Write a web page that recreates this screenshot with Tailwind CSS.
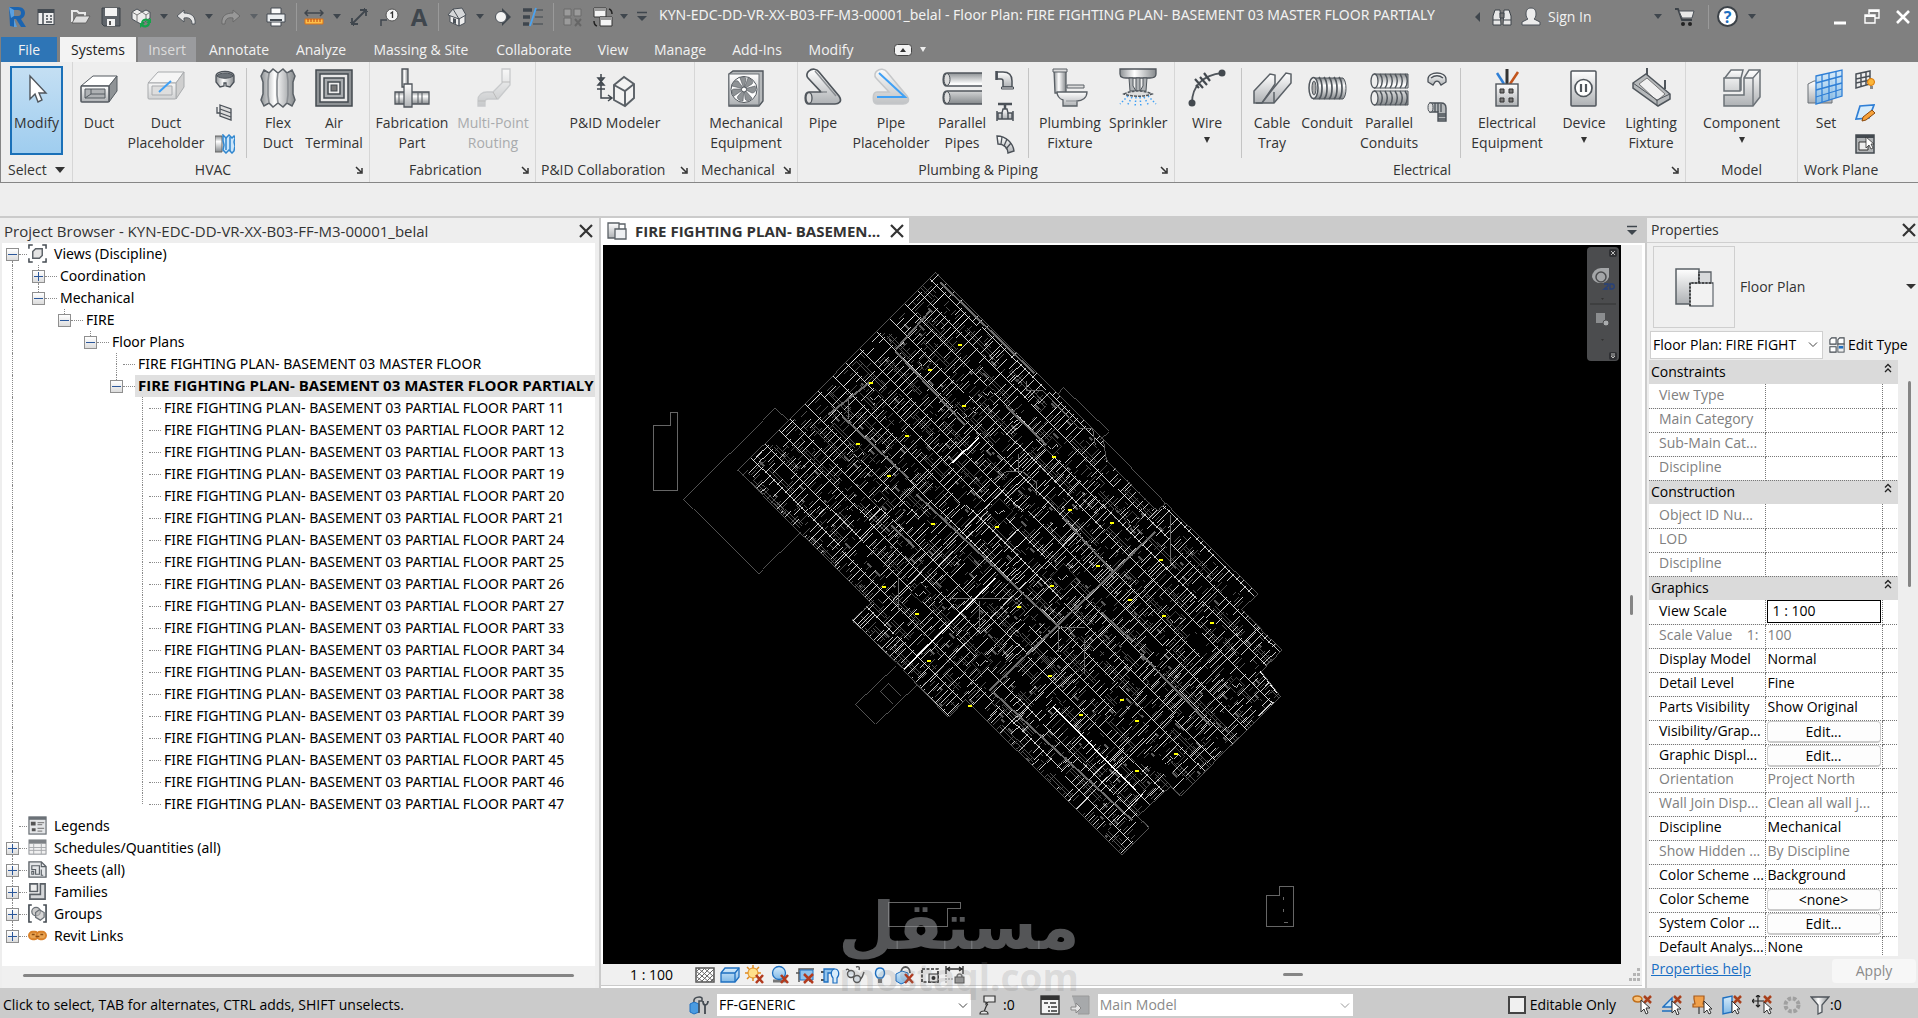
<!DOCTYPE html>
<html lang="en">

<head>
    <meta charset="UTF-8">
    <meta name="viewport" content="width=device-width, initial-scale=1.0">
    <title>Floor Plan: FIRE FIGHTING PLAN- BASEMENT 03 MASTER FLOOR PARTIALY</title>
    <script src="https://cdn.jsdelivr.net/npm/@tailwindcss/browser@4"></script>
</head>

<body class="flex h-screen flex-col overflow-hidden bg-[#eeeeee] font-['Open_Sans','Segoe_UI',sans-serif] text-sm text-[#333333]">

    <!-- shared gradients -->
    <svg class="absolute h-0 w-0" aria-hidden="true">
        <defs>
            <linearGradient id="steel" x1="0" y1="0" x2="0" y2="1"><stop offset="0" stop-color="#fff" /><stop offset="1" stop-color="#aeb1b4" /></linearGradient>
            <linearGradient id="tube" x1="0" y1="0" x2="0" y2="1"><stop offset="0" stop-color="#8d9194" /><stop offset=".35" stop-color="#fff" /><stop offset="1" stop-color="#85898c" /></linearGradient>
            <linearGradient id="ribs" x1="0" y1="0" x2="1" y2="0"><stop offset="0" stop-color="#8d9194" /><stop offset=".4" stop-color="#fff" /><stop offset="1" stop-color="#85898c" /></linearGradient>
            <linearGradient id="glass" x1="0" y1="0" x2="0" y2="1"><stop offset="0" stop-color="#d7ecfb" /><stop offset="1" stop-color="#7fb8e6" /></linearGradient>
        </defs>
    </svg>

    <!-- title bar -->
    <header class="flex h-[37px] shrink-0 items-center bg-[#808080] pb-1 text-[#f2f2f2]">
        <button class="flex w-[34px] justify-center" aria-label="Revit"><svg class="h-6 w-5" viewBox="0 0 20 24"><path d="M2 2h9c5 0 7 3 7 6 0 3-2 5-4 6l5 8h-5l-5-8H7l1 8-5-1z" fill="#1b64b0" /><path d="M7 5h4c2 0 3 1 3 3s-1 3-3 3H7z" fill="#808080" /><path d="M2 2l5 3v6l-3 2zM7 14l3 8H7z" fill="#5aa0e0" /></svg></button>
        <button class="flex w-6 justify-center" aria-label="Home"><svg class="h-5 w-5" viewBox="0 0 20 20"><rect x="2" y="2.500" width="16" height="15" fill="#eee" stroke="#444b52" /><path d="M2 3h16v3H2z" fill="#444b52" /><path d="M7 6v11M10 9h2M14 9h2M10 12h2M14 12h2M10 15h6" stroke="#444b52" stroke-width="1.500" /></svg></button>
        <button class="ml-2 flex w-[30px] justify-center" aria-label="Open"><svg class="h-5 w-5" viewBox="0 0 20 20"><path d="M1 15V4h5l2 2h6v3" fill="none" stroke="#e8e8e8" stroke-width="2" /><path d="M5 9h14l-4 7H1z" fill="#ddd" stroke="#555" stroke-width=".8" /></svg></button>
        <button class="flex w-[30px] justify-center" aria-label="Save"><svg class="h-5 w-5" viewBox="0 0 20 20"><path d="M1 1h18v18H3l-2-2z" fill="#5f646a" stroke="#3c4248" /><path d="M4 1h12v8H4zM6 12h8v7H6z" fill="#f4f4f4" /><path d="M8 14h2v4H8z" fill="#555" /></svg></button>
        <button class="flex w-[30px] justify-center" aria-label="Synchronize"><svg class="h-6 w-6" viewBox="0 0 24 24"><path d="M3 7l5-3 5 3 4-2 4 2v6l-4 3-5 3-4-2-5-3z" fill="#ececec" stroke="#4b5158" /><path d="M3 7l5 3v7M8 10l5-3M13 7l4 3v6M17 10l4-3" fill="none" stroke="#777" /><path d="M13 18a4 4 0 0 1 7-2M20 18a4 4 0 0 1-7 2" fill="none" stroke="#16a34a" stroke-width="2.200" /><path d="M22 13v5h-5zM11 23v-5h5z" fill="#16a34a" /></svg></button>
        <button class="flex w-[15px] justify-center" aria-label="Sync options"><svg class="h-1.5 w-2" viewBox="0 0 8 6"><path d="M0 0h8L4 5z" fill="#3f464d" /></svg></button>
        <button class="flex w-[30px] justify-center" aria-label="Undo"><svg class="h-5 w-5" viewBox="0 0 20 20"><path d="M8 3L1 9l7 6v-4c5-1 8 1 8 6h3c1-8-4-11-11-11z" fill="#e6e6e6" stroke="#4b5158" stroke-width=".9" /></svg></button>
        <button class="flex w-[15px] justify-center" aria-label="Undo list"><svg class="h-1.5 w-2" viewBox="0 0 8 6"><path d="M0 0h8L4 5z" fill="#3f464d" /></svg></button>
        <button class="flex w-[30px] justify-center" aria-label="Redo"><svg class="h-5 w-5" viewBox="0 0 20 20"><path d="M12 3l7 6-7 6v-4c-5-1-8 1-8 6H1C0 9 5 6 12 6z" fill="#989898" stroke="#666" stroke-width=".9" /></svg></button>
        <button class="flex w-[15px] justify-center" aria-label="Redo list"><svg class="h-1.5 w-2" viewBox="0 0 8 6"><path d="M0 0h8L4 5z" fill="#5c6166" /></svg></button>
        <button class="flex w-[30px] justify-center" aria-label="Print"><svg class="h-5 w-5" viewBox="0 0 20 20"><path d="M5 1h10v6H5zM5 13h10v6H5z" fill="#fafafa" stroke="#444b52" /><path d="M1 7h18v8H1z" fill="#eceff1" stroke="#444b52" /><path d="M4 12h12v2H4z" fill="#444b52" /></svg></button>
        <div class="mr-0.5 ml-[5px] h-7 w-px bg-[#9a9a9a]"></div>
        <button class="flex w-[30px] justify-center" aria-label="Measure"><svg class="h-5 w-5" viewBox="0 0 20 20"><path d="M1 6h18M4 3L1 6l3 3M16 3l3 3-3 3" fill="none" stroke="#3f464d" stroke-width="1.500" /><path d="M1 12h18v5H1z" fill="#fbbf4a" stroke="#d9731a" /><path d="M4 12v3M7 12v3M10 12v3M13 12v3M16 12v3" stroke="#c2410c" /></svg></button>
        <button class="flex w-[15px] justify-center" aria-label="Measure options"><svg class="h-1.5 w-2" viewBox="0 0 8 6"><path d="M0 0h8L4 5z" fill="#3f464d" /></svg></button>
        <button class="flex w-[30px] justify-center" aria-label="Aligned dimension"><svg class="h-5 w-5" viewBox="0 0 20 20"><path d="M3 17L17 3M3 11v6h6M11 3h6v6" fill="none" stroke="#3f464d" stroke-width="1.800" /><path d="M1 15l4 4M15 1l4 4" stroke="#3f464d" /></svg></button>
        <button class="flex w-[30px] justify-center" aria-label="Tag"><svg class="h-5 w-5" viewBox="0 0 20 20"><path d="M2 19V13h6" fill="none" stroke="#3f464d" stroke-width="1.500" /><circle cx="13" cy="8" r="6" fill="#f4f4f4" stroke="#555" /><path d="M11.500 6.500L13.500 5v6" fill="none" stroke="#333" stroke-width="1.300" /></svg></button>
        <button class="w-[30px] text-center text-2xl leading-6 font-bold text-[#3f464d]" aria-label="Text">A</button>
        <div class="mr-[3px] ml-1 h-7 w-px bg-[#9a9a9a]"></div>
        <button class="flex w-[30px] justify-center" aria-label="3D view"><svg class="h-5 w-5" viewBox="0 0 20 20"><path d="M3 8l9 3v8l-9-4zM12 11l6-3v8l-6 3z" fill="#eee" stroke="#4b5158" /><path d="M1 8l5-6 9-1 4 7-7 4z" fill="#d5d7d9" stroke="#4b5158" /><path d="M6 2l6 10" stroke="#4b5158" /><path d="M6 11l3 1v5l-3-1z" fill="#4b5158" /></svg></button>
        <button class="flex w-[15px] justify-center" aria-label="3D options"><svg class="h-1.5 w-2" viewBox="0 0 8 6"><path d="M0 0h8L4 5z" fill="#3f464d" /></svg></button>
        <button class="flex w-[30px] justify-center" aria-label="Section"><svg class="h-5 w-5" viewBox="0 0 20 20"><path d="M10 1l9 9-9 9z" fill="#3f464d" /><circle cx="9" cy="10" r="5.500" fill="#f4f4f4" stroke="#4b5158" /></svg></button>
        <button class="flex w-[32px] justify-center" aria-label="Thin lines"><svg class="h-5 w-5" viewBox="0 0 20 20"><path d="M0 3h9M0 10h7M0 17h6" stroke="#3f464d" stroke-width="3.500" /><path d="M13 3h7M12 10h8M10 17h10" stroke="#3f464d" /><path d="M13 1L7 19" stroke="#4aa3f0" stroke-width="1.800" /></svg></button>
        <div class="mx-1 h-7 w-px bg-[#9a9a9a]"></div>
        <button class="flex w-[30px] justify-center" aria-label="Close hidden"><svg class="h-5 w-5" viewBox="0 0 20 20"><path d="M1 2h7v7H1zM11 2h7v7h-7zM1 11h7v7H1z" fill="#9b9b9b" stroke="#6b6b6b" /><path d="M12 12l6 7M18 12l-6 7" stroke="#666" stroke-width="2" /></svg></button>
        <button class="flex w-[30px] justify-center" aria-label="Switch windows"><svg class="h-6 w-6" viewBox="0 0 24 24"><path d="M3 3h12v9H3zM9 12h12v9H9z" fill="#f4f4f4" stroke="#333" /><path d="M3 3h12v3H3zM9 12h12v3H9z" fill="#999" /><path d="M18 4c3 1 3 3 3 5M6 21c-3-1-3-3-3-5" fill="none" stroke="#222" stroke-width="1.500" /></svg></button>
        <button class="flex w-3 justify-center" aria-label="Windows list"><svg class="h-1.5 w-2" viewBox="0 0 8 6"><path d="M0 0h8L4 5z" fill="#3f464d" /></svg></button>
        <button class="flex w-6 justify-center" aria-label="Customize"><svg class="h-3 w-2.5" viewBox="0 0 10 12"><path d="M0 1.500h10" stroke="#3f464d" stroke-width="1.500" /><path d="M0 5h10l-5 5z" fill="#3f464d" /></svg></button>
        <h1 class="ml-[5px] min-w-0 flex-1 truncate pb-1 font-['Noto_Sans','Open_Sans',sans-serif]">KYN-EDC-DD-VR-XX-B03-FF-M3-00001_belal - Floor Plan: FIRE FIGHTING PLAN- BASEMENT 03 MASTER FLOOR PARTIALY</h1>
        <button class="flex w-6 justify-center" aria-label="Collapse search"><svg class="h-2.5 w-1.5" viewBox="0 0 6 10"><path d="M5 0v10L0 5z" fill="#3f464d" /></svg></button>
        <button class="flex w-6 justify-center" aria-label="Search"><svg class="h-5 w-5" viewBox="0 0 20 20"><path d="M3 3h5l1 15H1V9zM17 3h-5l-1 15h8V9z" fill="#e8e8e8" stroke="#3c4248" /><path d="M8 6h4v5H8zM1 13h7M12 13h7" fill="#777" stroke="#3c4248" /></svg></button>
        <button class="flex w-[34px] justify-center" aria-label="Account"><svg class="h-5 w-5" viewBox="0 0 20 20"><path d="M10 1c4 0 5 3 5 6s-1 4-2 5l6 3v3H1v-3l6-3C6 11 5 10 5 7s1-6 5-6z" fill="#ececec" stroke="#4b5158" /></svg></button>
        <button class="w-[102px] text-left">Sign In</button>
        <button class="flex w-4 justify-center" aria-label="Account options"><svg class="h-1.5 w-2" viewBox="0 0 8 6"><path d="M0 0h8L4 5z" fill="#3f464d" /></svg></button>
        <button class="flex w-[38px] justify-center" aria-label="App store"><svg class="h-5 w-5" viewBox="0 0 20 20"><path d="M0 2h3l4 11h10" fill="none" stroke="#3c4248" stroke-width="1.800" /><path d="M4 4h15l-2 7H7z" fill="#e8e8e8" stroke="#4b5158" /><circle cx="8" cy="17" r="2" fill="#222" /><circle cx="15" cy="17" r="2" fill="#222" /></svg></button>
        <div class="mx-1 h-6 w-px bg-[#9a9a9a]"></div>
        <button class="ml-1 flex h-[21px] w-[21px] items-center justify-center rounded-full border-2 border-[#3c4248] bg-white text-base leading-4 font-bold text-[#1e6fc0]" aria-label="Help">?</button>
        <button class="ml-1 flex w-5 justify-center" aria-label="Help options"><svg class="h-1.5 w-2" viewBox="0 0 8 6"><path d="M0 0h8L4 5z" fill="#3f464d" /></svg></button>
        <button class="ml-[62px] flex w-8 justify-center" aria-label="Minimize"><svg class="h-5 w-3" viewBox="0 0 12 20"><path d="M0 16h12" stroke="#fff" stroke-width="3" /></svg></button>
        <button class="flex w-8 justify-center" aria-label="Restore"><svg class="h-4 w-4" viewBox="0 0 16 16"><path d="M5 5V1h10v8h-4M1 6h10v8H1z" fill="none" stroke="#fff" stroke-width="1.400" /><path d="M5 2h10M1 7h10" stroke="#fff" stroke-width="2" /></svg></button>
        <button class="flex w-[30px] justify-center" aria-label="Close"><svg class="h-4 w-4" viewBox="0 0 16 16"><path d="M2 2l12 12M14 2L2 14" stroke="#fff" stroke-width="2.600" /></svg></button>
    </header>

    <!-- ribbon tabs -->
    <nav class="flex h-[25px] shrink-0 items-stretch bg-[#808080] pl-px text-[#f2f2f2]">
        <button class="w-14 bg-[#2e75b6]">File</button>
        <button class="ml-[3px] w-[76px] bg-[#f3f3f3] text-[#222222]">Systems</button>
        <button class="ml-0.5 w-[58px] bg-[#9a9b9e] text-[#dcdcdc]">Insert</button>
        <button class="w-[86px]">Annotate</button>
        <button class="w-[78px]">Analyze</button>
        <button class="w-[122px]">Massing &amp; Site</button>
        <button class="w-[104px]">Collaborate</button>
        <button class="w-[54px]">View</button>
        <button class="w-20">Manage</button>
        <button class="w-[74px]">Add-Ins</button>
        <button class="w-[74px]">Modify</button>
        <button class="ml-[26px] flex items-center gap-2" aria-label="Minimize ribbon"><svg class="h-3 w-[18px]" viewBox="0 0 18 12"><rect x=".5" y=".5" width="17" height="11" rx="3" fill="#f2f2f2" stroke="#444" /><path d="M6 8l3-4 3 4z" fill="#333" /></svg><svg class="h-1.5 w-1.5" viewBox="0 0 6 6"><path d="M0 0h6L3 5z" fill="#eee" /></svg></button>
    </nav>

    <!-- ribbon -->
    <section class="flex h-[121px] shrink-0 overflow-hidden border-b border-l border-[#868686] bg-[#eeeeee] [&_button]:shrink-0" aria-label="Systems">
        <div class="flex w-[71px] shrink-0 flex-col">
            <div class="flex h-[98px] pt-1 pl-[9px]">
                <button class="flex h-[89px] w-[53px] flex-col items-center border-2 border-[#1a70b8] bg-linear-to-b from-[#c4dff3] to-[#9fcdef] pt-0.5"><svg class="h-10 w-10" viewBox="0 0 40 40"><path d="M13 6v23l5-5 3 8 4-2-3-7h7z" fill="#fff" stroke="#50565c" stroke-width="1.400" /></svg><span class="mt-[3px]">Modify</span></button>
            </div>
            <button class="flex items-center gap-2 pl-[7px]">Select<svg class="h-2 w-2.5" viewBox="0 0 10 8"><path d="M0 1h10L5 7z" fill="#333" /></svg></button>
        </div>

        <div class="flex w-[297px] shrink-0 flex-col border-l border-[#d6d6d6]">
            <div class="flex h-[98px] pt-1.5">
                <button class="flex w-[52px] flex-col items-center"><svg class="h-10 w-10" viewBox="0 0 40 40"><path d="M2 18L14 8h24L30 18z" fill="#fff" stroke="#555b61" /><path d="M30 18l8-10v15l-8 11z" fill="#8f9396" stroke="#555b61" /><rect x="2" y="18" width="28" height="16" rx="1" fill="url(#steel)" stroke="#555b61" stroke-width="1.600" /><path d="M6 21h20v9H6z" fill="#aeb1b4" stroke="#555b61" /><path d="M6 30l6-4h14M12 26v-5" fill="none" stroke="#555b61" /></svg><span class="mt-[5px]">Duct</span></button>
                <button class="flex w-[82px] flex-col items-center"><svg class="h-10 w-10" viewBox="0 0 40 40"><g opacity=".45"><path d="M2 15L12 4h26L30 15z" fill="#fff" stroke="#555b61" /><path d="M30 15l8-11v15l-8 12z" fill="#aaa" stroke="#555b61" /><rect x="2" y="15" width="28" height="16" rx="1" fill="url(#steel)" stroke="#555b61" /><path d="M6 18h20v9H6z" fill="#ccc" stroke="#555b61" /></g><path d="M13 24l12-11" stroke="#3fa0f5" stroke-width="2" /></svg><span class="mt-[5px]">Duct<br>Placeholder</span></button>
                <div class="flex w-9 flex-col items-center gap-3 pt-0.5">
                    <button aria-label="Duct fitting"><svg class="h-5 w-5" viewBox="0 0 20 20"><path d="M1 6c0-6 18-6 18 0v6l-4 5-4-1v-3H9v3l-4 1-4-5z" fill="url(#ribs)" stroke="#4b5158" stroke-width="1.300" /><path d="M2 6c2-4 14-4 16 0-4 3-12 3-16 0z" fill="#6b7177" stroke="#4b5158" /></svg></button>
                    <button aria-label="Duct accessory"><svg class="h-5 w-5" viewBox="0 0 20 20"><path d="M5 3l11 4v11L5 14z" fill="#ddd" stroke="#4b5158" stroke-width="1.300" /><path d="M5 7l11 4M5 11l11 4M2 5v6h3" fill="none" stroke="#4b5158" stroke-width="1.300" /></svg></button>
                    <button aria-label="Convert to flex duct"><svg class="h-5 w-5" viewBox="0 0 20 20"><path d="M0 2h7v16H0z" fill="url(#tube)" stroke="#666" /><path d="M8 1l3 3 3-3 3 3 2-2 1 2-1 4 1 4-1 5-2 2-3-3-3 3-3-3 1-5-1-4z" fill="#cde6fa" stroke="#2f86cf" stroke-width="1.500" /><path d="M11 4v12M15 3v14" stroke="#2f86cf" stroke-width="1.500" /></svg></button>
                </div>
                <div class="mx-[3px] h-[90px] w-px shrink-0 bg-[#c4c4c4]"></div>
                <button class="flex w-[56px] flex-col items-center"><svg class="h-10 w-10" viewBox="0 0 40 40"><path d="M6 2l5 3 4-4 5 4 5-4 4 4 5-3 3 6-2 6v12l2 6-3 6-5-3-4 4-5-4-5 4-4-4-5 3-3-6 2-6V14L3 8z" fill="url(#ribs)" stroke="#5a6066" stroke-width="1.500" /><path d="M11 5l-1 8v14l1 8M20 5l-1 8v14l1 8M29 5l1 8v14l-1 8" fill="none" stroke="#8b8f93" stroke-width="1.700" /></svg><span class="mt-[5px] leading-5">Flex<br>Duct</span></button>
                <button class="flex w-[56px] flex-col items-center"><svg class="h-10 w-10" viewBox="0 0 40 40"><rect x="2" y="2" width="36" height="36" fill="#8e9295" stroke="#43494f" stroke-width="1.500" /><rect x="6" y="6" width="28" height="28" fill="#e8e8e8" stroke="#43494f" stroke-width="1.500" /><rect x="10" y="10" width="20" height="20" fill="#a9acaf" stroke="#43494f" stroke-width="1.500" /><rect x="14" y="14" width="12" height="12" fill="#eee" stroke="#43494f" stroke-width="1.500" /><rect x="17" y="17" width="6" height="6" fill="#777" stroke="#43494f" /></svg><span class="mt-[5px]">Air<br>Terminal</span></button>
            </div>
            <div class="flex items-center pr-1.5"><span class="flex-1 pr-0.5 text-center">HVAC</span><button aria-label="Mechanical settings"><svg class="h-2 w-2" viewBox="0 0 8 8"><path d="M1 1l5 5M2 7h5V2" fill="none" stroke="#333" stroke-width="1.500" /></svg></button></div>
        </div>

        <div class="flex w-[166px] shrink-0 flex-col border-l border-[#d6d6d6]">
            <div class="flex h-[98px] pt-1.5">
                <button class="flex w-[84px] flex-col items-center"><svg class="h-10 w-10" viewBox="0 0 40 40"><path d="M3 24h34v12H3z" fill="url(#tube)" stroke="#50565c" stroke-width="1.300" /><path d="M7 24v12M26 25v10M30 25v10" stroke="#50565c" /><path d="M10 1h6v18h-6z" fill="url(#ribs)" stroke="#50565c" stroke-width="1.300" /><path d="M12 16h8v23h-8z" fill="url(#steel)" stroke="#50565c" stroke-width="1.300" /></svg><span class="mt-[5px]">Fabrication<br>Part</span></button>
                <button class="flex w-[78px] flex-col items-center text-[#a9abad]" disabled><svg class="h-10 w-10 opacity-60" viewBox="0 0 40 40"><path d="M5 38V32c0-5 4-8 9-8h6l9-9V1h8v16L25 31H15c-2 0-3 1-3 3v4z" fill="url(#steel)" stroke="#b0b3b6" stroke-width="1.300" /><path d="M5 33h7M20 24l4 7M29 14h8" stroke="#999" /></svg><span class="mt-[5px]">Multi-Point<br>Routing</span></button>
            </div>
            <div class="flex items-center pr-1.5"><span class="flex-1 text-center">Fabrication</span><button aria-label="Fabrication settings"><svg class="h-2 w-2" viewBox="0 0 8 8"><path d="M1 1l5 5M2 7h5V2" fill="none" stroke="#333" stroke-width="1.500" /></svg></button></div>
        </div>

        <div class="flex w-[159px] shrink-0 flex-col border-l border-[#d6d6d6]">
            <div class="flex h-[98px] justify-center pt-1.5">
                <button class="flex flex-col items-center"><svg class="h-10 w-10" viewBox="0 0 40 40"><path d="M6 6v24h10M3 10l6 7H3l6-7zM2 21h8M13 27l4 3-4 3" fill="none" stroke="#3f464d" stroke-width="1.500" /><path d="M19 17l10-8 10 7v14l-9 8-11-6z" fill="#f2f2f2" stroke="#5a6066" stroke-width="1.900" /><path d="M19 17l11 6 9-7M30 23v15" fill="none" stroke="#5a6066" stroke-width="1.900" /></svg><span class="mt-[5px]">P&amp;ID Modeler</span></button>
            </div>
            <div class="flex items-center pr-1.5 pl-[5px]"><span class="flex-1 whitespace-nowrap">P&amp;ID Collaboration</span><button aria-label="P&amp;ID settings"><svg class="h-2 w-2" viewBox="0 0 8 8"><path d="M1 1l5 5M2 7h5V2" fill="none" stroke="#333" stroke-width="1.500" /></svg></button></div>
        </div>

        <div class="flex w-[103px] shrink-0 flex-col border-l border-[#d6d6d6]">
            <div class="flex h-[98px] justify-center pt-1.5">
                <button class="flex flex-col items-center"><svg class="h-10 w-10" viewBox="0 0 40 40"><path d="M3 6l4-3h30v30l-4 5H3z" fill="#b6b9bb" stroke="#50565c" stroke-width="1.400" /><rect x="3" y="6" width="30" height="31" fill="url(#steel)" stroke="#6b7177" /><circle cx="18" cy="21.500" r="13" fill="#fff" stroke="#50565c" /><path d="M18 21l-4-11c3-2 6-1 6 1zM18 21l4-11c4 1 6 4 4 6zM18 21l11-3c2 4 0 7-3 7zM18 21l8 9c-3 4-7 3-7 0zM18 21l-1 12c-4 0-7-3-5-5zM18 21L8 28c-3-3-3-7 0-7zM18 21L6 18c0-4 3-6 6-5z" fill="#8e9295" stroke="#50565c" stroke-width=".6" /><circle cx="18" cy="21.500" r="2.500" fill="#fff" stroke="#50565c" /></svg><span class="mt-[5px]">Mechanical<br>Equipment</span></button>
            </div>
            <div class="flex items-center pr-1.5 pl-1.5"><span class="flex-1">Mechanical</span><button aria-label="Mechanical equipment settings"><svg class="h-2 w-2" viewBox="0 0 8 8"><path d="M1 1l5 5M2 7h5V2" fill="none" stroke="#333" stroke-width="1.500" /></svg></button></div>
        </div>

        <div class="flex w-[377px] shrink-0 flex-col border-l border-[#d6d6d6]">
            <div class="flex h-[98px] pt-1.5">
                <button class="flex w-[50px] flex-col items-center"><svg class="h-10 w-10" viewBox="0 0 40 40"><path d="M6 3c3-3 8-2 10 1l20 24c4 6-1 8-4 8H6c-5 0-5-12 0-12h12L5 10C3 8 4 4 6 3z" fill="url(#steel)" stroke="#50565c" stroke-width="1.700" /><path d="M12 3l21 25M18 24h6" fill="none" stroke="#8b8f93" stroke-width="1.500" /><ellipse cx="6" cy="30" rx="3" ry="5.500" fill="#ddd" stroke="#50565c" stroke-width="1.300" /></svg><span class="mt-[5px]">Pipe</span></button>
                <button class="flex w-[86px] flex-col items-center"><svg class="h-10 w-10" viewBox="0 0 40 40"><path d="M6 3c3-3 8-2 10 1l20 24c4 6-1 8-4 8H6c-5 0-5-12 0-12h12L5 10C3 8 4 4 6 3z" fill="url(#steel)" stroke="#b4b7ba" stroke-width="1.500" opacity=".7" /><path d="M8 5l26 24H6" fill="none" stroke="#3fa0f5" stroke-width="2" /></svg><span class="mt-[5px]">Pipe<br>Placeholder</span></button>
                <button class="flex w-14 flex-col items-center"><svg class="h-10 w-10" viewBox="0 0 40 40"><path d="M40 5H5c-5 0-5 13 0 13h35M40 23H5c-5 0-5 13 0 13h35" fill="url(#tube)" stroke="#50565c" stroke-width="1.700" /><ellipse cx="5" cy="11.500" rx="3" ry="6" fill="#ddd" stroke="#50565c" /><ellipse cx="5" cy="29.500" rx="3" ry="6" fill="#ddd" stroke="#50565c" /></svg><span class="mt-[5px]">Parallel<br>Pipes</span></button>
                <div class="flex w-[30px] flex-col items-center gap-3 pt-0.5">
                    <button aria-label="Pipe fitting"><svg class="h-5 w-5" viewBox="0 0 20 20"><path d="M2 2h6c6 0 9 3 9 9v6H8v-6c0-1 0-2-2-2H2z" fill="url(#steel)" stroke="#4b5158" stroke-width="1.500" /><path d="M1.500 1v9" stroke="#4b5158" stroke-width="2.500" /><path d="M6.500 17h12v2h-12z" fill="#ddd" stroke="#4b5158" /></svg></button>
                    <button aria-label="Pipe accessory"><svg class="h-5 w-5" viewBox="0 0 20 20"><path d="M3 2h14M10 2v5" stroke="#4b5158" stroke-width="2.500" /><path d="M3 11h4l1-4h4l1 4h4v6H3z" fill="url(#steel)" stroke="#4b5158" stroke-width="1.400" /><path d="M2 9v10M18 9v10M7 11v6M13 11v6" stroke="#4b5158" stroke-width="1.500" /></svg></button>
                    <button aria-label="Flex pipe"><svg class="h-5 w-5" viewBox="0 0 20 20"><path d="M2 2c9 0 16 7 17 15l-6 2c0-5-4-9-10-9z" fill="url(#steel)" stroke="#4b5158" stroke-width="1.400" /><path d="M7 3l-1 7M12 5l-3 7M16 9l-5 6" stroke="#4b5158" stroke-width="1.300" /></svg></button>
                </div>
                <div class="mr-1 ml-2 h-[90px] w-px shrink-0 bg-[#c4c4c4]"></div>
                <button class="flex w-[74px] flex-col items-center"><svg class="h-10 w-10" viewBox="0 0 40 40"><path d="M4 2h12v23H5z" fill="url(#ribs)" stroke="#5a6066" stroke-width="1.300" /><path d="M3 1h14v3H3zM17 17h17v3H17z" fill="#ddd" stroke="#5a6066" /><path d="M7 24h30c0 6-5 9-10 9v5H13v-6c-4-1-6-5-6-8z" fill="url(#steel)" stroke="#5a6066" stroke-width="1.300" /><path d="M16 33h12" stroke="#8b8f93" /></svg><span class="mt-[5px]">Plumbing<br>Fixture</span></button>
                <button class="ml-0.5 flex flex-col items-center"><svg class="h-10 w-10" viewBox="0 0 40 40"><path d="M2 1h36v5c0 4-4 4-6 4H8c-2 0-6 0-6-4z" fill="url(#ribs)" stroke="#50565c" stroke-width="1.300" /><path d="M11 10h4v8l3 5h-6zM29 10h-4v8l-3 5h6zM18 10h4v13h-4z" fill="#aeb1b4" stroke="#50565c" /><path d="M6 26c8-4 20-4 28 0-8 3-20 3-28 0z" fill="#ddd" stroke="#50565c" stroke-dasharray="3 1" stroke-width="1.500" /><path d="M10 28L2 36M14 29l-5 9M18 29l-1 10M22 29l1 10M26 29l5 9M30 28l8 8" stroke="#3fa0f5" stroke-width="1.500" stroke-dasharray="1.500 2" /></svg><span class="mt-[5px]">Sprinkler</span></button>
            </div>
            <div class="flex items-center pr-1.5"><span class="flex-1 pr-0.5 text-center">Plumbing &amp; Piping</span><button aria-label="Plumbing settings"><svg class="h-2 w-2" viewBox="0 0 8 8"><path d="M1 1l5 5M2 7h5V2" fill="none" stroke="#333" stroke-width="1.500" /></svg></button></div>
        </div>

        <div class="flex w-[511px] shrink-0 flex-col border-l border-[#d6d6d6]">
            <div class="flex h-[98px] pt-1.5">
                <button class="flex w-16 flex-col items-center"><svg class="h-10 w-10" viewBox="0 0 40 40"><path d="M5 35C5 18 16 7 35 5" fill="none" stroke="#50565c" stroke-width="1.800" /><circle cx="5" cy="35" r="3.500" fill="#43494f" /><circle cx="35" cy="5" r="3.500" fill="#43494f" /><path d="M8 11l8 9M13 9l7 8M12 20l-3-3M17 5l6 8" stroke="#43494f" stroke-width="2.200" /></svg><span class="mt-[5px]">Wire</span><svg class="mt-1 h-1.5 w-1.5" viewBox="0 0 6 6"><path d="M0 0h6L3 6z" fill="#333" /></svg></button>
                <div class="mx-0.5 h-[90px] w-px shrink-0 bg-[#c4c4c4]"></div>
                <button class="flex w-14 flex-col items-center"><svg class="h-10 w-10" viewBox="0 0 40 40"><path d="M2 23L18 6l5 1v9L10 35H2z" fill="url(#steel)" stroke="#5a6066" stroke-width="1.500" /><path d="M4 35h18l17-20V6l-5-1-14 17-10 13z" fill="url(#steel)" stroke="#5a6066" stroke-width="1.500" /><path d="M22 35V24" stroke="#5a6066" stroke-width="1.500" /></svg><span class="mt-[5px]">Cable<br>Tray</span></button>
                <button class="flex w-[54px] flex-col items-center"><svg class="h-10 w-10" viewBox="0 0 40 40"><path d="M6 10h30c4 3 4 18 0 21H6z" fill="url(#tube)" stroke="#50565c" /><path d="M12 9c4 5 4 18 0 22M17 9c4 5 4 18 0 22M22 9c4 5 4 18 0 22M27 9c4 5 4 18 0 22M32 9c4 5 4 18 0 22" fill="none" stroke="#50565c" stroke-width="1.700" /><ellipse cx="6.500" cy="20" rx="4.500" ry="10.500" fill="#eee" stroke="#50565c" stroke-width="1.500" /><ellipse cx="7" cy="20" rx="2" ry="7" fill="#aaa" stroke="#50565c" /></svg><span class="mt-[5px]">Conduit</span></button>
                <button class="flex w-[70px] flex-col items-center"><svg class="h-10 w-10" viewBox="0 0 40 40"><path d="M5 6h34v14H5zM5 23h34v14H5z" fill="url(#tube)" stroke="#50565c" /><path d="M11 6c3 4 3 10 0 14M16 6c3 4 3 10 0 14M21 6c3 4 3 10 0 14M26 6c3 4 3 10 0 14M31 6c3 4 3 10 0 14M36 6c3 4 3 10 0 14M11 23c3 4 3 10 0 14M16 23c3 4 3 10 0 14M21 23c3 4 3 10 0 14M26 23c3 4 3 10 0 14M31 23c3 4 3 10 0 14M36 23c3 4 3 10 0 14" fill="none" stroke="#50565c" stroke-width="1.500" /><ellipse cx="5.500" cy="13" rx="3.500" ry="7" fill="#eee" stroke="#50565c" stroke-width="1.300" /><ellipse cx="5.500" cy="30" rx="3.500" ry="7" fill="#eee" stroke="#50565c" stroke-width="1.300" /></svg><span class="mt-[5px]">Parallel<br>Conduits</span></button>
                <div class="flex w-8 flex-col items-center gap-3 pt-0.5">
                    <button aria-label="Cable tray fitting"><svg class="h-5 w-5" viewBox="0 0 20 20"><path d="M1 9c0-8 18-8 18 0v3l-5 3-2-3c-1-1-3-1-4 0l-2 3-5-3z" fill="url(#steel)" stroke="#4b5158" stroke-width="1.300" /><path d="M4 8c4-3 8-3 12 0" fill="none" stroke="#4b5158" stroke-width="1.500" /></svg></button>
                    <button aria-label="Conduit fitting"><svg class="h-5 w-5" viewBox="0 0 20 20"><path d="M3 1h11c3 0 5 2 5 5v13h-8v-9H3z" fill="#b6b9bb" stroke="#4b5158" stroke-width="1.400" /><ellipse cx="3.500" cy="5.500" rx="2.500" ry="4.500" fill="#ddd" stroke="#4b5158" /><path d="M8 1v9M11 1v9M14 2v8M11 12h8M11 14h8M11 17h8" stroke="#4b5158" stroke-width="1.300" /></svg></button>
                </div>
                <div class="mr-0.5 ml-2.5 h-[90px] w-px shrink-0 bg-[#c4c4c4]"></div>
                <button class="flex w-[88px] flex-col items-center"><svg class="h-10 w-10" viewBox="0 0 40 40"><path d="M20 17V1" stroke="#333" stroke-width="3" /><path d="M17 16L10 5" stroke="#2f7fd6" stroke-width="2.500" /><path d="M23 16l8-12" stroke="#c2541c" stroke-width="2.500" /><rect x="9" y="16" width="22" height="22" fill="url(#steel)" stroke="#50565c" stroke-width="1.400" /><path d="M13 21h4v4h-4zM22 21h4v4h-4zM13 30h4v4h-4zM22 30h4v4h-4z" fill="#777" stroke="#333" /></svg><span class="mt-[5px]">Electrical<br>Equipment</span></button>
                <button class="flex w-[66px] flex-col items-center"><svg class="h-10 w-10" viewBox="0 0 40 40"><rect x="7" y="3" width="25" height="35" rx="1" fill="url(#steel)" stroke="#50565c" stroke-width="1.500" /><circle cx="19.500" cy="20" r="8.500" fill="#fff" stroke="#50565c" stroke-width="1.700" /><path d="M17 16v8M22 16v8" stroke="#50565c" stroke-width="2.200" /></svg><span class="mt-[5px]">Device</span><svg class="mt-1 h-1.5 w-1.5" viewBox="0 0 6 6"><path d="M0 0h6L3 6z" fill="#333" /></svg></button>
                <button class="flex w-[68px] flex-col items-center"><svg class="h-10 w-10" viewBox="0 0 40 40"><path d="M16 8V0M34 21v-9" stroke="#50565c" stroke-width="2" /><path d="M2 15l13-9 24 20v5l-12 7L2 20z" fill="#b6b9bb" stroke="#50565c" stroke-width="1.500" /><path d="M8 16l8-6 18 16-8 7z" fill="#f0f0f0" stroke="#777" /><path d="M2 15l24 17 13-6M26 32v6" fill="none" stroke="#50565c" /></svg><span class="mt-[5px]">Lighting<br>Fixture</span></button>
            </div>
            <div class="flex items-center pr-1.5"><span class="flex-1 pr-0.5 text-center">Electrical</span><button aria-label="Electrical settings"><svg class="h-2 w-2" viewBox="0 0 8 8"><path d="M1 1l5 5M2 7h5V2" fill="none" stroke="#333" stroke-width="1.500" /></svg></button></div>
        </div>

        <div class="flex w-[112px] shrink-0 flex-col border-l border-[#d6d6d6]">
            <div class="flex h-[98px] justify-center pt-1.5">
                <button class="flex flex-col items-center"><svg class="h-10 w-10" viewBox="0 0 40 40"><path d="M2 11L9 2h12l-2 8v12h-3" fill="url(#steel)" stroke="#6b7177" stroke-width="1.500" /><path d="M2 10h16v13H2zM22 10l5-8h11v27l-7 9H2V27h20z" fill="url(#steel)" stroke="#6b7177" stroke-width="1.500" /><path d="M22 10h9v28M31 10l7-8" fill="none" stroke="#6b7177" stroke-width="1.300" /></svg><span class="mt-[5px]">Component</span><svg class="mt-1 h-1.5 w-1.5" viewBox="0 0 6 6"><path d="M0 0h6L3 6z" fill="#333" /></svg></button>
            </div>
            <div class="text-center">Model</div>
        </div>

        <div class="flex shrink-0 flex-col border-l border-[#d6d6d6]">
            <div class="flex h-[98px] pt-1.5 pl-1.5">
                <button class="flex w-11 flex-col items-center"><svg class="h-10 w-10" viewBox="0 0 40 40"><path d="M2 16l6-3h18v22H2z" fill="url(#steel)" stroke="#6b7177" /><path d="M10 8l26-6v26l-26 8z" fill="url(#glass)" stroke="#2f7fd6" stroke-width="1.300" fill-opacity=".9" /><path d="M16 7v27M23 5v27M30 4v26M10 15l26-7M10 22l26-7M10 29l26-8" stroke="#2f7fd6" stroke-width="1.300" /></svg><span class="mt-[5px]">Set</span></button>
                <div class="flex w-[34px] flex-col items-center gap-3 pt-0.5">
                    <button aria-label="Show work plane"><svg class="h-5 w-5" viewBox="0 0 20 20"><path d="M1 4l14-3v13L1 18zM6 3v14M11 2v13M1 9l14-3M1 13l14-3" fill="none" stroke="#4b5158" stroke-width="1.500" /><circle cx="16" cy="12" r="3.500" fill="#fbb63a" stroke="#d97706" /><path d="M15 16h3v3h-3z" fill="#888" /></svg></button>
                    <button aria-label="Reference plane"><svg class="h-5 w-5" viewBox="0 0 20 20"><path d="M1 17L5 4l14-1-5 13z" fill="#d7ecfb" stroke="#2f7fd6" stroke-width="1.700" /><path d="M7 19l1-4 9-7 3 3-9 7z" fill="#f6a13a" stroke="#8a4b10" /></svg></button>
                    <button aria-label="Work plane viewer"><svg class="h-5 w-5" viewBox="0 0 20 20"><rect x="1" y="1" width="18" height="18" fill="#b0b3b5" stroke="#43494f" stroke-width="1.500" /><path d="M1 1h18v3H1z" fill="#43494f" /><path d="M4 8h9v8H4z" fill="#eee" stroke="#333" /><path d="M11 3v11l3-3 2 4 2-1-2-4h3z" fill="#fff" stroke="#333" stroke-width=".8" /></svg></button>
                </div>
            </div>
            <div class="pl-1.5">Work Plane</div>
        </div>
    </section>

    <div class="h-[33px] shrink-0 border-b-2 border-[#cbcbcb] box-content"></div>

    <main class="flex min-h-0 flex-1">

        <!-- project browser -->
        <aside class="flex w-[601px] shrink-0 flex-col border-r-2 border-[#cbcbcb]">
            <div class="flex h-[25px] shrink-0 items-center justify-between pr-1.5 pl-1">
                <h2 class="text-[15px] leading-5">Project Browser - KYN-EDC-DD-VR-XX-B03-FF-M3-00001_belal</h2>
                <button aria-label="Close project browser"><svg class="h-3.5 w-3.5" viewBox="0 0 14 14"><path d="M1 1l12 12M13 1L1 13" stroke="#333" stroke-width="2.200" /></svg></button>
            </div>
            <ul id="tree" class="mr-1 ml-0.5 min-h-0 flex-1 overflow-hidden bg-white font-['Noto_Sans','Open_Sans',sans-serif] text-black"></ul>
            <div class="mr-1 ml-0.5 h-[22px] shrink-0 bg-[#f0f0f0] px-[21px] pt-2"><div class="h-[3px] rounded-full bg-[#858585]"></div></div>
        </aside>

        <!-- drawing area -->
        <section class="flex min-w-0 flex-1 flex-col bg-white">
            <div class="flex h-[25px] shrink-0 items-stretch justify-between bg-[#cbcbcb]">
                <div class="flex w-[308px] items-center bg-white pl-1.5">
                    <svg class="h-5 w-5 shrink-0" viewBox="0 0 20 20"><path d="M1 2h11v15H1z" fill="url(#steel)" stroke="#5a6066" stroke-width="1.300" /><path d="M8 8h11v10H8z" fill="#eef0f2" stroke="#5a6066" stroke-width="1.300" /><path d="M12 3h6v5" fill="none" stroke="#5a6066" stroke-width="1.300" /></svg>
                    <span class="ml-2 w-[248px] text-[15px] leading-5 font-bold whitespace-nowrap">FIRE FIGHTING PLAN- BASEMEN...</span>
                    <button class="ml-[7px]" aria-label="Close view"><svg class="h-3.5 w-3.5" viewBox="0 0 14 14"><path d="M1 1l12 12M13 1L1 13" stroke="#333" stroke-width="2.200" /></svg></button>
                </div>
                <button class="pr-2" aria-label="View list"><svg class="h-3 w-2.5" viewBox="0 0 10 12"><path d="M0 1.500h10" stroke="#3f464d" stroke-width="1.500" /><path d="M0 5h10l-5 5z" fill="#3f464d" /></svg></button>
            </div>
            <div class="mt-0.5 flex min-h-0 flex-1">
                <div class="relative ml-0.5 min-w-0 flex-1 bg-black">
                    <svg id="plan" class="h-full w-full" viewBox="603 245 1018 719" preserveAspectRatio="xMidYMid slice" shape-rendering="crispEdges" fill="none"></svg>
                    <div class="absolute top-0.5 right-0.5 flex h-[114px] w-8 flex-col items-center rounded bg-[#4b4c4e]">
                        <svg class="h-[114px] w-8" viewBox="0 0 32 114"><rect x="22" y="2" width="8" height="8" rx="2" fill="#2f3033" /><path d="M24 4l4 4M28 4l-4 4" stroke="#bbb" /><path d="M5 30a9 9 0 0 1 9-9h8v9a9 9 0 0 1-17 0z" fill="#a4a6a8" /><circle cx="14" cy="30" r="5" fill="none" stroke="#4b4c4e" stroke-width="1.500" /><path d="M17 37h4v2l-4 3h4M23 37h2c3 0 3 5 0 5h-2z" fill="none" stroke="#27407a" stroke-width="1.300" /><path d="M3 57h26" stroke="#333" /><path d="M9 66h9v10H9z" fill="#8b8d8f" /><circle cx="19" cy="76" r="3" fill="#aaacae" stroke="#4b4c4e" /><path d="M14 51h3l-1.500 2zM14 92h3l-1.500 2z" fill="#333" /><rect x="22" y="105" width="8" height="8" rx="2" fill="#2f3033" /><path d="M24 107h4M24 109h4l-2 2z" stroke="#bbb" /></svg>
                    </div>
                    <!-- watermark spans the canvas and both bars below it -->
                    <div class="pointer-events-none absolute bottom-[-33px] left-[236px] z-10 flex w-[240px] flex-col items-center text-[#8c8e91]/60">
                        <div class="text-[66px] leading-[60px] font-bold font-['DejaVu_Sans','Open_Sans',sans-serif]" lang="ar" dir="rtl">مستقل</div>
                        <div class="text-[37px] leading-10 font-bold text-[#808080]/20">mostaql.com</div>
                    </div>
                </div>
                <div class="mr-[3px] flex w-[21px] items-center justify-center bg-[#f0f0f0]"><div class="h-5 w-[3px] rounded-full bg-[#858585]"></div></div>
            </div>
            <div class="mr-[3px] mb-0.5 flex h-[22px] shrink-0 items-center border-b border-[#cbcbcb] bg-[#f0f0f0] pl-[29px] text-black">
                <span class="w-[65px]">1 : 100</span>
                <button class="w-[25px]" aria-label="Detail level"><svg class="h-5 w-5" viewBox="0 0 20 20"><rect x="1" y="3" width="18" height="14" fill="#fff" stroke="#555" stroke-width="1.500" /><path d="M1 7l4-4M1 12l9-9M1 17L15 3M6 17L19 4M11 17l8-8M16 17l3-3M19 13l-4 4M3 3l16 14M9 3l10 9M1 6l13 11M1 11l7 6" stroke="#666" /></svg></button>
                <button class="w-[25px]" aria-label="Visual style"><svg class="h-5 w-5" viewBox="0 0 20 20"><path d="M1 8l4-5h14v9l-4 5H1z" fill="url(#glass)" stroke="#1e6fc0" stroke-width="1.300" /><path d="M1 8h14l4-5M15 8v9" fill="none" stroke="#1e6fc0" stroke-width="1.300" /></svg></button>
                <button class="w-[25px]" aria-label="Sun path"><svg class="h-5 w-5" viewBox="0 0 20 20"><path d="M8 0v16M0 8h16M2 2l12 12M14 2L2 14" stroke="#e08a1e" stroke-width="1.500" /><circle cx="8" cy="8" r="5" fill="#ffe08a" stroke="#e08a1e" /><path d="M11 10l7 8M18 10l-7 8" stroke="#b23a1e" stroke-width="2.500" /></svg></button>
                <button class="w-[25px]" aria-label="Shadows"><svg class="h-5 w-5" viewBox="0 0 20 20"><path d="M3 16h13" stroke="#777" stroke-width="3" /><circle cx="9" cy="8" r="6.500" fill="url(#glass)" stroke="#1e6fc0" stroke-width="1.300" /><path d="M11 10l7 8M18 10l-7 8" stroke="#b23a1e" stroke-width="2.500" /></svg></button>
                <button class="w-[25px]" aria-label="Crop view"><svg class="h-5 w-5" viewBox="0 0 20 20"><path d="M4 17V4h15M1 8h14v9" fill="none" stroke="#555" stroke-width="1.500" /><path d="M5 5h13v10H5z" fill="#8fc2ec" stroke="#1e6fc0" /><path d="M9 9l9 9M18 9l-9 9" stroke="#b23a1e" stroke-width="2.500" /></svg></button>
                <button class="w-[25px]" aria-label="Show crop region"><svg class="h-5 w-5" viewBox="0 0 20 20"><path d="M1 7h3M1 15h3" stroke="#555" stroke-width="2" /><path d="M4 17V4h10v4H8v9z" fill="#8fc2ec" stroke="#1e6fc0" stroke-width="1.300" /><path d="M13 13c-3-3-2-9 2-9s5 6 2 9v5h-4z" fill="#d7ecfb" stroke="#1e6fc0" stroke-width="1.200" /></svg></button>
                <button class="w-[25px]" aria-label="Temporary hide"><svg class="h-5 w-5" viewBox="0 0 20 20"><path d="M1 5c2-2 3 0 4 2M11 2c3-1 4 0 3 3M19 7c-1 4-2 6-4 8" stroke="#555" stroke-width="1.400" fill="none" /><circle cx="6" cy="9" r="3.500" fill="#e6eef5" stroke="#555" stroke-width="1.400" /><circle cx="12" cy="14" r="3.500" fill="#e6eef5" stroke="#555" stroke-width="1.400" /></svg></button>
                <button class="w-[25px]" aria-label="Reveal hidden elements"><svg class="h-5 w-5" viewBox="0 0 20 20"><path d="M8 13c-4-3-3-10 2-10s6 7 2 10z" fill="#d7ecfb" stroke="#1e6fc0" stroke-width="1.400" /><path d="M8 14h4v4H8z" fill="#777" /></svg></button>
                <button class="w-[25px]" aria-label="Worksharing display"><svg class="h-5 w-5" viewBox="0 0 20 20"><path d="M6 8c0-8 9-8 9 0" fill="none" stroke="#555" stroke-width="1.800" /><path d="M1 9l6-3 6 2v8l-7 3-5-3z" fill="url(#glass)" stroke="#1e6fc0" /><path d="M10 9l8 9M18 9l-8 9" stroke="#b23a1e" stroke-width="2.500" /></svg></button>
                <button class="w-[25px]" aria-label="Temporary view properties"><svg class="h-5 w-5" viewBox="0 0 20 20"><path d="M2 4h16v13H2z" fill="none" stroke="#333" stroke-width="1.700" stroke-dasharray="3 1.500" /><rect x="9" y="9" width="9" height="8" fill="#ddd" stroke="#333" /><circle cx="13.500" cy="13" r="2" fill="#333" /></svg></button>
                <button class="w-[25px]" aria-label="Reveal constraints"><svg class="h-5 w-5" viewBox="0 0 20 20"><path d="M1 1v8M18 1v8M1 4h17M5 2L2 4l3 2M14 2l3 2-3 2" fill="none" stroke="#333" stroke-width="1.400" /><path d="M1 10v8M3 14h6" stroke="#888" stroke-dasharray="2 1" /><path d="M12 12c0-4 5-4 5 0" fill="none" stroke="#777" stroke-width="1.500" /><rect x="10" y="12" width="9" height="6" fill="#999" stroke="#555" /></svg></button>
                <div class="flex flex-1 justify-center pr-3"><div class="h-[3px] w-5 rounded-full bg-[#858585]"></div></div>
                <svg class="h-3.5 w-3.5" viewBox="0 0 14 14"><path d="M9 0h3v3H9zM9 5h3v3H9zM9 10h3v3H9zM5 5h3v3H5zM5 10h3v3H5zM1 10h3v3H1z" fill="#b5b5b5" /></svg>
            </div>
        </section>

        <!-- properties -->
        <aside class="flex w-[273px] shrink-0 flex-col border-l-2 border-[#cbcbcb]">
            <div class="flex h-[25px] shrink-0 items-center justify-between border-b border-[#cfcfcf] pr-0.5 pl-1">
                <h2>Properties</h2>
                <button aria-label="Close properties"><svg class="h-3.5 w-3.5" viewBox="0 0 14 14"><path d="M1 1l12 12M13 1L1 13" stroke="#333" stroke-width="2.200" /></svg></button>
            </div>
            <button class="flex h-[87px] shrink-0 items-center bg-[#f0f0f0] pr-0.5 pl-1.5 text-left">
                <span class="flex h-[82px] w-[82px] items-center justify-center border border-[#cfcfcf]"><svg class="h-10 w-10" viewBox="0 0 40 40"><path d="M2 2h23v15H17v20H2z" fill="url(#steel)" stroke="#5a6066" stroke-width="1.500" /><path d="M25 5h12v12H25z" fill="#d8dadc" stroke="#5a6066" stroke-width="1.300" /><path d="M16 16h23v23H16z" fill="#f2f2f2" stroke="#6b7177" stroke-width="1.300" /><path d="M16 39V16h23M25 16V5" fill="none" stroke="#333" stroke-width="1.600" stroke-dasharray="2 1.500" /></svg></span>
                <span class="ml-[5px] flex-1">Floor Plan</span>
                <svg class="h-1.5 w-2.5" viewBox="0 0 10 6"><path d="M0 0h10L5 5z" fill="#333" /></svg>
            </button>
            <div class="flex h-[30px] shrink-0 items-center pl-[3px]">
                <label class="relative block w-[173px]">
                    <span class="sr-only">Instance filter</span>
                    <select class="h-7 w-full appearance-none border border-[#cfcfcf] bg-white pr-5 pl-0.5 text-black"><option>Floor Plan: FIRE FIGHT</option></select>
                    <svg class="pointer-events-none absolute top-2.5 right-1 h-2 w-3" viewBox="0 0 12 8"><path d="M2 1.500l4 4 4-4" fill="none" stroke="#444" /></svg>
                </label>
                <button class="ml-1.5 flex items-center gap-[3px] whitespace-nowrap text-black"><svg class="h-4 w-4" viewBox="0 0 18 18"><path d="M1 3l2-2h5v7H1zM10 3l2-2h5v7h-7zM1 11h7v6H1z" fill="#fff" stroke="#444b52" stroke-width="1.200" /><rect x="10" y="8" width="7" height="9" fill="#eee" stroke="#444b52" /><path d="M11 10h5v3h-5z" fill="#1e6fc0" /></svg>Edit Type</button>
            </div>
            <div class="flex min-h-0 flex-1 pl-0.5">
                <div class="min-h-0 w-[249px] overflow-hidden">
                    <table class="w-full table-fixed border-collapse text-black">
                        <colgroup><col class="w-[116px]"><col class="w-[117px]"><col class="w-4"></colgroup>
                        <tbody id="props"></tbody>
                    </table>
                </div>
                <div class="ml-2.5 pt-[21px]"><div class="h-[206px] w-[3px] rounded-full bg-[#858585]"></div></div>
            </div>
            <div class="flex h-8 shrink-0 justify-between pt-[3px] pr-0.5 pl-1">
                <a href="#help" class="leading-5 text-[#1a6fc4] underline">Properties help</a>
                <button class="h-6 w-[84px] rounded bg-[#f7f7f7] text-[#8a8a8a]" disabled>Apply</button>
            </div>
        </aside>
    </main>

    <!-- status bar -->
    <footer class="flex h-[30px] shrink-0 items-center bg-[#cbcbcb] pt-1 pl-[3px] text-black">
        <span class="min-w-0 flex-1 truncate">Click to select, TAB for alternates, CTRL adds, SHIFT unselects.</span>
        <div class="flex w-[1229px] shrink-0 items-center">
            <svg class="h-5 w-5" viewBox="0 0 20 20"><path d="M1 9l4-2 5 2v8l-5 2-4-2z" fill="#4a9be0" stroke="#1e6fc0" /><path d="M5 7c-1-5 6-6 8-4v3h-3v12" fill="none" stroke="#444b52" stroke-width="1.500" /><path d="M14 6c0 3 1 4 2 4s3-1 3-4M16 10v9" fill="none" stroke="#444b52" stroke-width="1.800" /></svg>
            <label class="relative ml-2 block w-[254px]">
                <span class="sr-only">Active workset</span>
                <select class="h-[22px] w-full appearance-none bg-white pl-0.5 text-black"><option>FF-GENERIC</option></select>
                <svg class="pointer-events-none absolute top-2 right-0.5 h-2 w-3" viewBox="0 0 12 8"><path d="M2 1.500l4 4 4-4" fill="none" stroke="#444" /></svg>
            </label>
            <button class="ml-2 flex items-center gap-1.5"><svg class="h-5 w-[18px]" viewBox="0 0 18 20"><path d="M5 1h11v6H9l-2 2V7H5zM9 9c-3 2-2 5-4 7M1 19c0-4 8-4 8 0z" fill="#e8e8e8" stroke="#333" stroke-width="1.200" /></svg>:0</button>
            <button class="ml-[25px]" aria-label="Design options"><svg class="h-5 w-5" viewBox="0 0 20 20"><rect x="1" y="1" width="18" height="18" fill="#f4f4f4" stroke="#333" stroke-width="1.400" /><path d="M1 1h18v4H1z" fill="#333" /><path d="M4 8h4M10 8h6M8 12h2M11 12h6M8 16h2M11 16h6" stroke="#333" stroke-width="1.600" /></svg></button>
            <button class="ml-2.5" aria-label="Exclude options" disabled><svg class="h-5 w-5" viewBox="0 0 20 20"><path d="M2 1h17v18H8" fill="#a7a9ab" stroke="#999" /><path d="M1 12h5V8l5 5-5 5v-3H1z" fill="#e4e4e4" stroke="#888" /></svg></button>
            <label class="relative ml-2 block w-[255px]">
                <span class="sr-only">Active design option</span>
                <select class="h-[22px] w-full appearance-none bg-white pl-0.5 text-[#8a8a8a] opacity-100" disabled><option>Main Model</option></select>
                <svg class="pointer-events-none absolute top-2 right-0.5 h-2 w-3" viewBox="0 0 12 8"><path d="M2 1.500l4 4 4-4" fill="none" stroke="#999" /></svg>
            </label>
            <label class="ml-[155px] flex items-center gap-1"><input type="checkbox" class="h-[18px] w-[18px] appearance-none border-2 border-[#444444] bg-[#f0f0f0]">Editable Only</label>
            <div class="ml-4 flex gap-2.5">
                <button aria-label="Select links"><svg class="h-5 w-5" viewBox="0 0 20 20"><path d="M1 4c0-4 8-4 9 0 0 4-8 4-9 0z" fill="#f9c27a" stroke="#c2701c" stroke-width="1.500" /><path d="M12 1l7 7M19 1l-7 7" stroke="#a8401c" stroke-width="2.500" /><path d="M9 5v12l3-3 2 5 2-1-2-5h4z" fill="#fff" stroke="#333" /></svg></button>
                <button aria-label="Select underlay"><svg class="h-5 w-5" viewBox="0 0 20 20"><path d="M1 12l9-9v9zM0 16h10" fill="#bfe0f7" stroke="#1e6fc0" stroke-width="1.400" /><path d="M12 1l7 7M19 1l-7 7" stroke="#a8401c" stroke-width="2.500" /><path d="M10 6v12l3-3 2 5 2-1-2-5h4z" fill="#fff" stroke="#333" /></svg></button>
                <button aria-label="Select pinned"><svg class="h-5 w-5" viewBox="0 0 20 20"><path d="M2 1h10v3l-1 5h2v3H1V9h2L2 4z" fill="#f0a04a" stroke="#a85a1c" stroke-width="1.200" /><path d="M7 12v7" stroke="#555" stroke-width="1.500" /><path d="M12 6v12l3-3 2 4 2-1-2-4h3z" fill="#fff" stroke="#333" /></svg></button>
                <button aria-label="Select by face"><svg class="h-5 w-5" viewBox="0 0 20 20"><path d="M1 3l9-2v16l-9 2z" fill="url(#glass)" stroke="#1e6fc0" stroke-width="1.400" /><path d="M12 1l7 7M19 1l-7 7" stroke="#a8401c" stroke-width="2.500" /><path d="M10 6v12l3-3 2 4 2-1-2-4h3z" fill="#fff" stroke="#333" /></svg></button>
                <button aria-label="Drag on selection"><svg class="h-5 w-5" viewBox="0 0 20 20"><path d="M6 0v12M0 6h12M4 2l2-2 2 2M4 10l2 2 2-2M2 4L0 6l2 2" fill="none" stroke="#222" stroke-width="1.200" /><path d="M12 1l7 7M19 1l-7 7" stroke="#a8401c" stroke-width="2.500" /><path d="M12 7v11l3-3 2 4 2-1-2-4h3z" fill="#fff" stroke="#333" /></svg></button>
                <button aria-label="Background processes"><svg class="h-5 w-5" viewBox="0 0 20 20"><circle cx="10" cy="10" r="6.500" fill="none" stroke="#a0a0a0" stroke-width="4" stroke-dasharray="3.500 1.600" /></svg></button>
                <button class="-ml-0.5 flex items-center"><svg class="h-5 w-5" viewBox="0 0 20 20"><path d="M1 2h18l-7 8v7l-4 2v-9z" fill="url(#ribs)" stroke="#50565c" stroke-width="1.300" /></svg>:0</button>
            </div>
        </div>
    </footer>

    <script>
        // project browser rows: [level, kind, label, icon]; kind: '-' open, '+' closed, '' leaf
        const parts = [11, 12, 13, 19, 20, 21, 24, 25, 26, 27, 33, 34, 35, 38, 39, 40, 45, 46, 47];
        const rows = [
            [0, '-', 'Views (Discipline)', 'views'],
            [1, '+', 'Coordination'],
            [1, '-', 'Mechanical'],
            [2, '-', 'FIRE'],
            [3, '-', 'Floor Plans'],
            [4, '', 'FIRE FIGHTING PLAN- BASEMENT 03 MASTER FLOOR'],
            [4, '-', 'FIRE FIGHTING PLAN- BASEMENT 03 MASTER FLOOR PARTIALY'],
            ...parts.map(n => [5, '', 'FIRE FIGHTING PLAN- BASEMENT 03 PARTIAL FLOOR PART ' + n]),
            [0, '', 'Legends', 'legends'],
            [0, '+', 'Schedules/Quantities (all)', 'schedules'],
            [0, '+', 'Sheets (all)', 'sheets'],
            [0, '+', 'Families', 'families'],
            [0, '+', 'Groups', 'groups'],
            [0, '+', 'Revit Links', 'links'],
        ];
        const treeIcons = {
            views: '<path d="M1 5V1h4M15 1h4v4M19 15v4h-4M5 19H1v-4" fill="none" stroke="#444b52" stroke-width="1.600"/><path d="M5 8l3-3h7v7l-3 3H5z" fill="#e4e4e4" stroke="#5a6066" stroke-width="1.500"/>',
            legends: '<rect x="1" y="1" width="18" height="18" fill="#e4e6e8" stroke="#6b7177" stroke-width="1.300"/><path d="M1 1h18v3H1z" fill="#6b7177"/><path d="M3 6h5v4H3zM4 13h4v3H4z" fill="#555"/><path d="M10 7h7M10 9h5M10 13h7M10 16h5" stroke="#888" stroke-width="1.300"/>',
            schedules: '<rect x="1" y="2" width="18" height="15" fill="#f0f0f0" stroke="#8b8f93"/><path d="M1 2h18v4H1z" fill="#7d8185"/><path d="M1 10h18M1 13h18M6 6v11M14 6v11" stroke="#a5a8ab"/>',
            sheets: '<path d="M1 2h13l5 5v11H1z" fill="#e4e6e8" stroke="#5a6066" stroke-width="1.400"/><path d="M14 2v5h5M4 6h8v9H8v-5H4zM4 12h2v3H4zM14 10v6h2" fill="none" stroke="#5a6066" stroke-width="1.200"/>',
            families: '<path d="M2 2h8v8H2z" fill="#eee" stroke="#5a6066" stroke-width="1.700"/><path d="M13 2h5v16H2v-5h11z" fill="#d5d7d9" stroke="#5a6066" stroke-width="1.700"/>',
            groups: '<path d="M4 1H1v18h3M16 1h3v18h-3" fill="none" stroke="#444b52" stroke-width="1.700"/><circle cx="8.500" cy="8" r="4.500" fill="#ccc" stroke="#6b7177" stroke-width="1.300"/><path d="M8 9l4-3 5 3v5l-4 3-5-3z" fill="#bbb" fill-opacity=".6" stroke="#6b7177" stroke-width="1.300"/>',
            links: '<rect x="1" y="6" width="10" height="8" rx="4" fill="#e9a452" stroke="#d9822b" stroke-width="2"/><rect x="9" y="6" width="10" height="8" rx="4" fill="#e9a452" stroke="#d9822b" stroke-width="2"/><path d="M4 9h3M8 11h4M13 9h3" stroke="#8a4b10" stroke-width="1.600"/>',
        };
        const line = on => `<i class="w-px flex-1 border-l border-dotted ${on ? 'border-[#8a8a8a]' : 'border-transparent'}"></i>`;
        document.getElementById('tree').innerHTML = rows.map(([level, kind, label, icon], i) => {
            const lastPart = level === 5 && label.endsWith('47');
            const up = i > 0;
            const down = (level === 0 && i < rows.length - 1) || label === 'Coordination' || (kind === '' && !lastPart);
            let lead = '';
            for (let l = 0; l < level; l++) {
                lead += `<span class="flex w-[26px] shrink-0 justify-start pl-1.5">${l === 0 ? '<i class="w-px border-l border-dotted border-[#8a8a8a]"></i>' : ''}</span>`;
            }
            const box = kind ? `<span class="flex h-[13px] w-[13px] items-center justify-center border border-[#8f8f8f] bg-linear-to-b from-white to-[#dcdcdc]"><svg class="h-[9px] w-[9px]" viewBox="0 0 9 9"><path d="${kind === '+' ? 'M0 4.500h9M4.500 0v9' : 'M0 4.500h9'}" stroke="#2b579a"/></svg></span>` : '';
            const svg = icon ? `<svg class="mb-0.5 h-[19px] w-[19px] shrink-0 self-center" viewBox="0 0 20 20">${treeIcons[icon]}</svg>` : '';
            const bold = label.endsWith('PARTIALY');
            return `<li class="flex h-[22px] pl-1 whitespace-nowrap">${lead}<span class="flex w-[13px] shrink-0 flex-col items-center">${line(up)}${box}${line(down)}</span><i class="shrink-0 self-center border-t border-dotted border-[#8a8a8a] ${icon ? 'mr-px w-2' : 'w-3'}"></i>${svg}<span class="${bold ? "min-w-0 flex-1 bg-[#e0e0e0] pl-[3px] font-['Open_Sans',sans-serif] text-[15px] leading-5 font-bold" : icon ? 'pl-[7px] leading-[22px]' : 'pl-[3px] leading-[22px]'}">${label}</span></li>`;
        }).join('');

        // property grid: [group] or [name, value, style]
        const props = [
            ['Constraints'], ['View Type', '', 'off'], ['Main Category', '', 'off'], ['Sub-Main Cat...', '', 'off'], ['Discipline', '', 'off'],
            ['Construction'], ['Object ID Nu...', '', 'off'], ['LOD', '', 'off'], ['Discipline', '', 'off'],
            ['Graphics'], ['View Scale', '1 : 100', 'input'], ['Scale Value    1:', '100', 'off'], ['Display Model', 'Normal'], ['Detail Level', 'Fine'],
            ['Parts Visibility', 'Show Original'], ['Visibility/Grap...', 'Edit...', 'button'], ['Graphic Displ...', 'Edit...', 'button'],
            ['Orientation', 'Project North', 'off'], ['Wall Join Disp...', 'Clean all wall j...', 'off'], ['Discipline', 'Mechanical'],
            ['Show Hidden ...', 'By Discipline', 'off'], ['Color Scheme ...', 'Background'], ['Color Scheme', '&lt;none&gt;', 'button'],
            ['System Color ...', 'Edit...', 'button'], ['Default Analys...', 'None'],
        ];
        document.getElementById('props').innerHTML = props.map(([name, value, style]) => {
            if (value === undefined) {
                return `<tr class="h-6 bg-[#dadada]"><th colspan="3" class="p-0 pl-0.5 text-left font-normal"><span class="flex items-center justify-between pr-1.5">${name}<svg class="mb-2 h-2.5 w-2" viewBox="0 0 8 10"><path d="M1 4.500l3-3 3 3M1 9l3-3 3 3" fill="none" stroke="#222" stroke-width="1.300"/></svg></span></th></tr>`;
            }
            let cell = value;
            if (style === 'input') cell = `<input aria-label="View Scale" value="${value}" class="block h-[23px] w-full border border-black bg-white pb-0.5 pl-[5px] text-black">`;
            if (style === 'button') cell = `<button class="block h-[22px] w-full rounded border border-b-2 border-[#cbcbcb] bg-[#fdfdfd] leading-[19px]">${value}</button>`;
            const tone = style === 'off' ? 'text-[#808080]' : 'text-black';
            return `<tr class="h-6 bg-white ${tone}"><td class="overflow-hidden border-r border-b border-dotted border-[#777777] p-0 pb-0.5 pl-2.5 whitespace-pre">${name}</td><td class="border-r border-b border-dotted border-[#777777] whitespace-nowrap ${style === 'input' || style === 'button' ? 'px-px py-0' : 'pt-0 pr-0 pb-0.5 pl-0.5'}">${cell}</td><td class="border-r border-b border-dotted border-[#777777] p-0"></td></tr>`;
        }).join('');

        // floor plan: hand-placed shapes use 2.45 units to the pixel, origin at (680, 250)
        const px = ([x, y]) => (Math.round(680 + x / 2.45) - 0.5) + ' ' + (Math.round(250 + y / 2.45) - 0.5);
        const poly = pts => 'M' + pts.map(px).join('L');
        let seed = 7;
        const rnd = () => (seed = (seed * 16807) % 2147483647) / 2147483647;
        const int = n => Math.floor(rnd() * n);
        const outline = [[628, 55], [1040, 465], [1045, 515], [1170, 640], [1190, 622], [1415, 842], [1378, 880], [1475, 980], [1425, 1035], [1472, 1095], [1228, 1337], [1203, 1312], [1120, 1388], [1150, 1415], [1084, 1483], [712, 1113], [700, 1100], [659, 1143], [550, 1030], [422, 908], [468, 865], [142, 542]];
        // building grid in whole pixels: u runs down-right, v runs down-left
        const at = (u, v) => (936.5 + u - v) + ' ' + (272.5 + u + v);
        const seg = (u1, v1, u2, v2) => 'M' + at(u1, v1) + 'L' + at(u2, v2);
        let white = '', gray = '', solid = '';
        for (let v = 5; v < 320; v += 14) {
            for (let u = 0; u < 495;) {
                const run = 50 + int(120), j = int(4) - 2;
                if (rnd() < 0.92) white += seg(u, v + j, u + run - 4, v + j);
                for (let k = u + 2; k < u + run; k += 4) {
                    const r = rnd(), len = 5 + int(9);
                    if (r < 0.44) white += seg(k, v + j - len, k, v + j + 1);
                    else if (r < 0.88) white += seg(k, v + j - 1, k, v + j + len);
                    if (rnd() < 0.8) { const w = v + 2 + int(8); gray += seg(k + 2, w, k + 2, w + 3 + int(7)); }
                    if (rnd() < 0.35) { const w = v + int(14); gray += seg(k, w, k + 2 + int(4), w); }
                    if (rnd() < 0.2) { const w = v + int(14); solid += seg(k, w, k + 2 + int(4), w); }
                }
                u += run;
            }
            for (let u = int(30); u < 490; u += 20 + int(50)) {
                const w = v + 6 + int(4), len = 10 + int(26);
                gray += seg(u, w, u + len, w) + seg(u, w + 2, u + len, w + 2);
            }
        }
        for (const u of [38, 96, 142, 148, 200, 262, 330, 338, 402, 450]) white += seg(u, 8 + int(40), u, 180 + int(120));
        const bands = [[[530, 250], [700, 430]], [[400, 410], [560, 560]], [[580, 600], [930, 925]], [[770, 1085], [1110, 1400]], [[940, 660], [1060, 790]], [[640, 80], [870, 305]], [[1130, 990], [1300, 1165]], [[1035, 890], [1110, 960]], [[800, 385], [900, 480]], [[520, 675], [575, 730]], [[1165, 690], [760, 1080]], [[530, 245], [615, 150]], [[365, 405], [465, 325]]];
        const mains = [[[775, 805], [550, 1028]], [[917, 1120], [1117, 1325]], [[1135, 1335], [1070, 1400]], [[735, 460], [670, 522]], [[1423, 1035], [1465, 1088]]];
        const thin = [[[850, 320], [850, 345], [890, 345], [980, 438], [1013, 438], [1020, 480]], [[413, 360], [413, 415]], [[536, 800], [536, 882]], [[660, 856], [805, 856]], [[734, 860], [734, 935]], [[928, 985], [928, 925], [993, 925]], [[993, 955], [993, 1040]], [[1204, 650], [1204, 770]], [[770, 565], [800, 543], [840, 543], [875, 570], [875, 600]], [[830, 500], [830, 543]]];
        const loose = [[[265, 420], [232, 390], [10, 610], [193, 793], [297, 693]], [[530, 1020], [432, 1113], [480, 1161], [580, 1065]], [[525, 1112], [493, 1080], [512, 1062], [545, 1093]], [[925, 352], [938, 338], [1050, 445], [1030, 465]], [[1038, 463], [1178, 605], [1190, 622]]];
        const marks = [[687, 232], [613, 293], [467, 325], [697, 382], [557, 455], [435, 475], [513, 553], [621, 671], [777, 678], [916, 507], [956, 636], [1059, 668], [1178, 759], [1025, 775], [911, 823], [831, 875], [501, 825], [581, 891], [1103, 857], [1185, 896], [1303, 913], [610, 1006], [711, 1117], [907, 1043], [1084, 1102], [982, 1139], [1120, 1153], [1215, 1234], [1120, 1276]];
        const rooms = [[785, 640, 32], [940, 800, 32], [590, 840, 26], [740, 1010, 24], [915, 480, 22], [480, 360, 20], [600, 275, 18], [710, 400, 16], [440, 500, 18], [1215, 905, 20], [1215, 1240, 22], [755, 350, 18], [490, 610, 22], [1365, 1065, 20], [1110, 660, 20]];
        document.getElementById('plan').innerHTML = `
            <clipPath id="shell"><path d="${poly(outline)}z"/></clipPath>
            <g clip-path="url(#shell)" stroke-width=".8">
                <path d="${gray}" stroke="#666"/>
                <path d="${solid}" stroke="#5a5a5a" stroke-width="2"/>
                <path d="${white}" stroke="#fff"/>
                <path d="${rooms.map(([x, y, s]) => poly([[x, y - s], [x + s, y], [x, y + s], [x - s, y]]) + 'z').join('')}" fill="#000" stroke="#4a4a4a"/>
                <path d="${rooms.map(([x, y]) => poly([[x - 12, y], [x - 4, y + 8], [x + 8, y - 4], [x + 14, y + 2]])).join('')}" stroke="#ddd"/>
                <path d="${bands.map(poly).join('')}" stroke="#6e6e6e" stroke-width="2"/>
                <path d="${thin.map(poly).join('')}" stroke="#6e6e6e" stroke-width="1"/>
                <path d="${mains.map(poly).join('')}" stroke="#fff" stroke-width="1.400"/>
            </g>
            <path d="${poly(outline)}z${loose.map(poly).join('')}" stroke="#666" stroke-width=".8"/>
            <path d="M670.500 412.500h7v78h-24v-65h17zM1279.500 886.500h14v40h-27v-31h13zM888.500 902.500h72v6h-13v18h-59zM1283 897v3M1283 909v3M1284 922h4" stroke="#666"/>
            ${marks.map(m => { const [x, y] = px(m).split(' '); return `<path d="M${x} ${y}m-2 0h4" stroke="#ff0" stroke-width="2"/>`; }).join('')}`;
    </script>
</body>

</html>
